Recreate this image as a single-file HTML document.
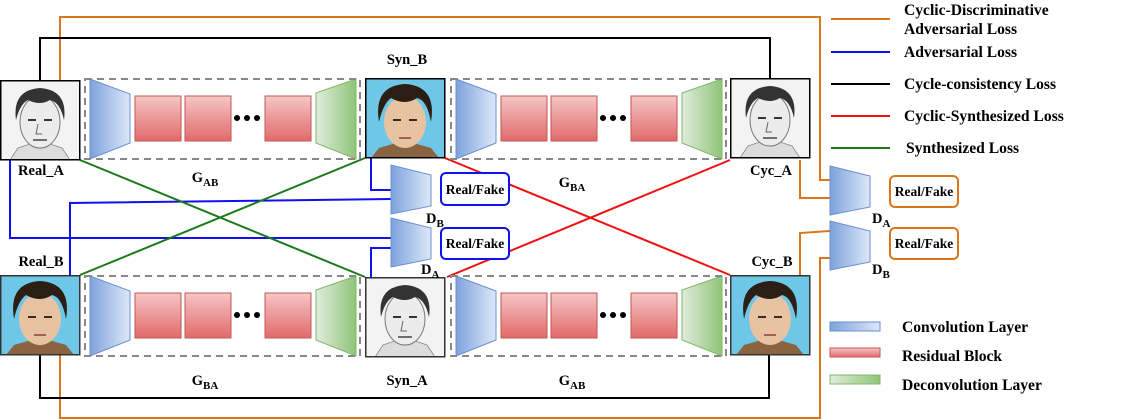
<!DOCTYPE html>
<html><head><meta charset="utf-8"><style>
body{margin:0;background:#fff}
svg{display:block}
text{font-family:"Liberation Serif",serif;font-weight:bold;fill:#000}
</style></head><body>
<svg width="1141" height="420" viewBox="0 0 1141 420" xmlns="http://www.w3.org/2000/svg">
<defs>
<linearGradient id="cv" x1="0" x2="1" y1="0" y2="0"><stop offset="0" stop-color="#7ea2dc"/><stop offset="1" stop-color="#dde8f8"/></linearGradient>
<linearGradient id="rd" x1="0" x2="0" y1="0" y2="1"><stop offset="0" stop-color="#f5c6c6"/><stop offset="1" stop-color="#e26a6a"/></linearGradient>
<linearGradient id="gr" x1="0" x2="1" y1="0" y2="0"><stop offset="0" stop-color="#e0ecdb"/><stop offset="1" stop-color="#8fc579"/></linearGradient>
<g id="sketch">
<rect x="0" y="0" width="80" height="80" fill="#f3f3f3"/>
<path d="M10 80 L18 68 L30 64 L50 64 L62 68 L70 80Z" fill="#ddd" stroke="#888" stroke-width="0.8"/>
<ellipse cx="40" cy="42" rx="20" ry="26" fill="#ececec" stroke="#777"/>
<path d="M16 40 Q12 10 40 8 Q68 10 64 40 Q60 22 50 20 Q40 26 28 20 Q20 24 16 40Z" fill="#333"/>
<path d="M28 40 h8 M44 40 h8" stroke="#333" stroke-width="2"/>
<path d="M38 44 L36 54 L42 54" stroke="#666" fill="none"/>
<path d="M33 60 h14" stroke="#444" stroke-width="1.5"/>
</g>
<g id="photo">
<rect x="0" y="0" width="80" height="80" fill="#6fc7e8"/>
<path d="M6 80 L14 70 L28 66 L52 66 L66 70 L74 80Z" fill="#8a6440"/>
<ellipse cx="40" cy="44" rx="21" ry="26" fill="#e8c3a2"/>
<path d="M14 44 Q8 8 40 6 Q72 8 66 44 Q62 22 52 20 Q40 28 26 20 Q18 26 14 44Z" fill="#2b1e15"/>
<path d="M28 42 h8 M44 42 h8" stroke="#3a2a20" stroke-width="2"/>
<path d="M34 60 h12" stroke="#a0605a" stroke-width="2"/>
</g>
<g id="gen">
<path d="M5 0 L45 15 L45 64 L5 80Z" fill="url(#cv)" stroke="#6b8fce"/>
<rect x="50" y="17" width="46" height="45" fill="url(#rd)" stroke="#c45656"/>
<rect x="100" y="17" width="46" height="45" fill="url(#rd)" stroke="#c45656"/>
<rect x="180" y="17" width="46" height="45" fill="url(#rd)" stroke="#c45656"/>
<circle cx="152" cy="39" r="3"/><circle cx="162" cy="39" r="3"/><circle cx="172" cy="39" r="3"/>
<path d="M231 14 L271 0 L271 80 L231 64Z" fill="url(#gr)" stroke="#82b86a"/>
<rect x="0" y="0" width="275" height="80" fill="none" stroke="#888" stroke-width="2" stroke-dasharray="7,5"/>
</g>
<path id="disc" d="M0 0 L40 10 L40 41 L0 49Z" fill="url(#cv)" stroke="#6b8fce"/>
</defs>

<g fill="none" stroke-width="2">
<path d="M60 80 V17 H820 V180 H830" stroke="#d9761a"/>
<path d="M60 355 V418 H820 V258 H830" stroke="#d9761a"/>
<path d="M800 160 V198 H830" stroke="#d9761a"/>
<path d="M800 275 V233 L830 231" stroke="#d9761a"/>
<path d="M40 80 V38 H770 V78" stroke="#000"/>
<path d="M40 355 V398 H769 V355" stroke="#000"/>
<path d="M371 158 V190 H391" stroke="#1010f0"/>
<path d="M70 275 V203 L391 199" stroke="#1010f0"/>
<path d="M10 160 V238 H391" stroke="#1010f0"/>
<path d="M371 277 V248 H391" stroke="#1010f0"/>
<path d="M80 160 L365 277" stroke="#1a7a1a"/>
<path d="M365 158 L80 275" stroke="#1a7a1a"/>
<path d="M445 158 L730 275" stroke="#f01010"/>
<path d="M447 277 L730 160" stroke="#f01010"/>
</g>

<use href="#gen" x="85" y="79"/>
<use href="#gen" x="451" y="79"/>
<use href="#gen" x="85" y="276"/>
<use href="#gen" x="451" y="276"/>

<use href="#sketch" x="0" y="80"/><rect x="0.75" y="80.75" width="79" height="79" fill="none" stroke="#000" stroke-width="1.5"/>
<use href="#photo" x="365" y="78"/><rect x="365.75" y="78.75" width="79" height="79" fill="none" stroke="#000" stroke-width="1.5"/>
<use href="#sketch" x="730" y="78"/><rect x="730.75" y="78.75" width="79" height="79" fill="none" stroke="#000" stroke-width="1.5"/>
<use href="#photo" x="0" y="275"/><rect x="0.75" y="275.75" width="79" height="79" fill="none" stroke="#333" stroke-width="1.5"/>
<use href="#sketch" x="365" y="277"/><rect x="365.75" y="277.75" width="79" height="79" fill="none" stroke="#333" stroke-width="1.5"/>
<use href="#photo" x="730" y="275"/><rect x="730.75" y="275.75" width="79" height="79" fill="none" stroke="#333" stroke-width="1.5"/>

<use href="#disc" x="391" y="165"/>
<use href="#disc" x="391" y="218"/>
<use href="#disc" x="830" y="166"/>
<use href="#disc" x="830" y="221"/>

<rect x="441" y="173" width="68" height="32" rx="5" fill="#fff" stroke="#1010f0" stroke-width="2"/>
<rect x="441" y="228" width="68" height="31" rx="5" fill="#fff" stroke="#1010f0" stroke-width="2"/>
<rect x="890" y="176" width="68" height="31" rx="5" fill="#fff" stroke="#d9761a" stroke-width="2"/>
<rect x="890" y="228" width="68" height="31" rx="5" fill="#fff" stroke="#d9761a" stroke-width="2"/>
<g font-size="13.5" text-anchor="middle">
<text x="475" y="194">Real/Fake</text>
<text x="475" y="248">Real/Fake</text>
<text x="924" y="196">Real/Fake</text>
<text x="924" y="248">Real/Fake</text>
</g>

<g font-size="14.5" text-anchor="middle">
<text x="407" y="64">Syn_B</text>
<text x="41" y="175">Real_A</text>
<text x="771" y="175">Cyc_A</text>
<text x="41" y="266">Real_B</text>
<text x="772" y="266">Cyc_B</text>
<text x="407" y="385">Syn_A</text>
<text x="205" y="182">G<tspan font-size="11" dy="4">AB</tspan></text>
<text x="572" y="187">G<tspan font-size="11" dy="4">BA</tspan></text>
<text x="205" y="385">G<tspan font-size="11" dy="4">BA</tspan></text>
<text x="572" y="385">G<tspan font-size="11" dy="4">AB</tspan></text>
</g>
<g font-size="14.5">
<text x="426" y="223">D<tspan font-size="11" dy="4">B</tspan></text>
<text x="421" y="274">D<tspan font-size="11" dy="4">A</tspan></text>
<text x="872" y="223">D<tspan font-size="11" dy="4">A</tspan></text>
<text x="872" y="274">D<tspan font-size="11" dy="4">B</tspan></text>
</g>

<g stroke-width="2">
<line x1="831" y1="19" x2="890" y2="19" stroke="#d9761a"/>
<line x1="831" y1="52" x2="890" y2="52" stroke="#1010f0"/>
<line x1="831" y1="84" x2="890" y2="84" stroke="#000"/>
<line x1="831" y1="116" x2="890" y2="116" stroke="#f01010"/>
<line x1="831" y1="148" x2="890" y2="148" stroke="#1a7a1a"/>
</g>
<g font-size="15.6">
<text x="904" y="15">Cyclic-Discriminative</text>
<text x="904" y="34">Adversarial Loss</text>
<text x="904" y="57">Adversarial Loss</text>
<text x="904" y="89">Cycle-consistency Loss</text>
<text x="904" y="121">Cyclic-Synthesized Loss</text>
<text x="906" y="153">Synthesized Loss</text>
<text x="902" y="332">Convolution Layer</text>
<text x="902" y="361">Residual Block</text>
<text x="902" y="390">Deconvolution Layer</text>
</g>
<rect x="830" y="322" width="50" height="9" fill="url(#cv)" stroke="#6b8fce"/>
<rect x="830" y="348" width="50" height="9" fill="url(#rd)" stroke="#c45656"/>
<rect x="830" y="375" width="50" height="9" fill="url(#gr)" stroke="#82b86a"/>
</svg>
</body></html>
